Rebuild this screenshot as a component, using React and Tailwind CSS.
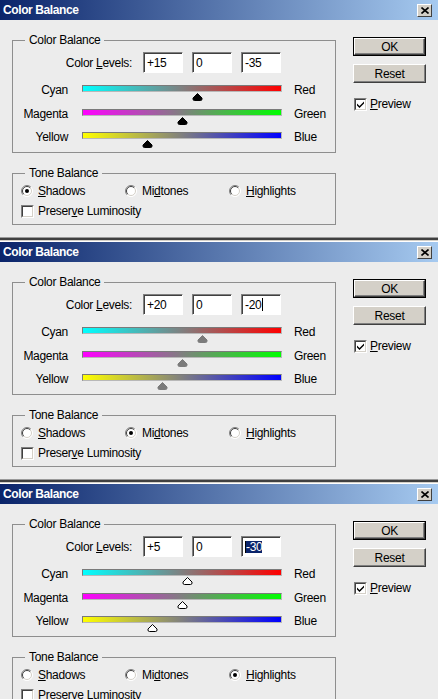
import React from 'react';

const dialogs = [
  { levels: ['+15', '0', '-35'], values: [15, 0, -35], tone: 'shadows', thumb: 'black', field: 'none' },
  { levels: ['+20', '0', '-20'], values: [20, 0, -20], tone: 'midtones', thumb: 'gray', field: 'caret' },
  { levels: ['+5', '0', '-30'], values: [5, 0, -30], tone: 'highlights', thumb: 'white', field: 'select' },
];

const sliders = [
  { left: 'Cyan', right: 'Red', track: 'bg-[linear-gradient(to_right,#00ffff,#ff0000)]' },
  { left: 'Magenta', right: 'Green', track: 'bg-[linear-gradient(to_right,#ff00ff,#00ff00)]' },
  { left: 'Yellow', right: 'Blue', track: 'bg-[linear-gradient(to_right,#ffff00,#0000ff)]' },
];

function Thumb({ variant, value }) {
  const fill = variant === 'black' ? '#000' : variant === 'gray' ? '#7b7b7b' : '#fff';
  const stroke = variant === 'white' ? '#000' : fill;
  // track is 200px wide for -100..+100
  const left = value + 100 - 5.5;
  return (
    <svg className="absolute top-[8px]" style={{ left }} width="11" height="8" viewBox="0 0 11 8">
      <path d="M5.5 0.5 L10 5 V6 Q10 7.5 8.5 7.5 H2.5 Q1 7.5 1 6 V5 Z" fill={fill} stroke={stroke} />
    </svg>
  );
}

function Radio({ checked }) {
  return (
    <svg width="12" height="12" viewBox="0 0 12 12" className="shrink-0">
      <circle cx="6" cy="6" r="5.5" fill="#fff" />
      <path d="M2.1 9.9 A5.5 5.5 0 0 1 9.9 2.1" fill="none" stroke="#808080" />
      <path d="M9.9 2.1 A5.5 5.5 0 0 1 2.1 9.9" fill="none" stroke="#ffffff" />
      <path d="M2.8 9.2 A4.5 4.5 0 0 1 9.2 2.8" fill="none" stroke="#404040" />
      <path d="M9.2 2.8 A4.5 4.5 0 0 1 2.8 9.2" fill="none" stroke="#d4d0c8" />
      {checked && <circle cx="6" cy="6" r="2" fill="#000" />}
    </svg>
  );
}

function CheckBox({ checked }) {
  return (
    <span className="flex h-[13px] w-[13px] shrink-0 border border-t-[#808080] border-l-[#808080] border-b-white border-r-white">
      <span className="flex h-full w-full items-center justify-center border border-t-[#404040] border-l-[#404040] border-b-[#d4d0c8] border-r-[#d4d0c8] bg-white">
        {checked && (
          <svg width="7" height="7" viewBox="0 0 7 7">
            <polygon points="0,2.5 2.5,5 7,0.5 7,2.5 2.5,7 0,4.5" fill="#000" />
          </svg>
        )}
      </span>
    </span>
  );
}

function LevelInput({ text, field }) {
  return (
    <div className="h-[21px] w-[40px] border border-t-[#808080] border-l-[#808080] border-b-white border-r-white bg-white shadow-[inset_1px_1px_0_#404040]">
      <div className="flex h-full items-center pl-[3px]">
        {field === 'select' ? (
          <>
            <span className="h-[12px] w-px bg-black" />
            <span className="bg-[#0a246a] leading-[12px] text-white">{text}</span>
          </>
        ) : (
          <>
            <span>{text}</span>
            {field === 'caret' && <span className="ml-px h-[13px] w-px bg-black" />}
          </>
        )}
      </div>
    </div>
  );
}

function RaisedButton({ label, isDefault }) {
  return (
    <div className={isDefault ? 'h-[19px] border border-black' : 'h-[19px]'}>
      <div className="flex h-full items-center justify-center border border-t-white border-l-white border-b-[#404040] border-r-[#404040] bg-[#d4d0c8] shadow-[inset_-1px_-1px_0_#808080]">
        {label}
      </div>
    </div>
  );
}

function Dialog({ first, levels, values, tone, thumb, field }) {
  return (
    <div className="flex flex-col">
      {!first && (
        <>
          <div className="h-px bg-[#d4d0c8]" />
          <div className="h-px bg-white" />
        </>
      )}
      {/* title bar */}
      <div className="flex h-[20px] items-center justify-between bg-[linear-gradient(to_right,#0a246a,#a6caf0)] pl-[3px] pr-[6px]">
        <span className="text-[12px] font-bold tracking-[-0.4px] text-white">Color Balance</span>
        <div className="flex h-[13px] w-[15px] items-center justify-center border border-t-white border-l-white border-b-[#404040] border-r-[#404040] bg-[#d4d0c8]">
          <svg width="8" height="7" viewBox="0 0 8 7">
            <path d="M0.5 0.5 L7.5 6.5 M7.5 0.5 L0.5 6.5" stroke="#000" strokeWidth="1.6" />
          </svg>
        </div>
      </div>

      <div className="flex h-[217px] pl-[12px]">
        <div className="w-[324px] pt-[13px]">
          <fieldset className="h-[120px] border border-[#8e8e8e]">
            <legend className="ml-[12px] px-[4px] leading-[14px]">Color Balance</legend>
            <div className="mt-[5px] flex h-[21px] items-center">
              <span className="w-[119px] text-right">
                Color <u>L</u>evels:
              </span>
              <div className="ml-[11px] flex gap-[9px]">
                {levels.map((t, i) => (
                  <LevelInput key={i} text={t} field={i === 2 ? field : 'none'} />
                ))}
              </div>
            </div>
            <div className="mt-[12px] flex flex-col gap-[8.5px]">
              {sliders.map((s, i) => (
                <div key={s.left} className="flex h-[15px] items-start">
                  <span className="-mt-[2px] w-[55px] text-right leading-[14px]">{s.left}</span>
                  <div className="relative ml-[14px] h-[15px] w-[200px]">
                    <div className={`h-[7px] border border-t-[#7a7a7a] border-l-[#7a7a7a] border-b-[#b8b8b8] border-r-[#b8b8b8] ${s.track}`} />
                    <Thumb variant={thumb} value={values[i]} />
                  </div>
                  <span className="-mt-[2px] ml-[12px] leading-[14px]">{s.right}</span>
                </div>
              ))}
            </div>
          </fieldset>

          <fieldset className="mt-[13px] h-[59px] border border-[#8e8e8e]">
            <legend className="ml-[12px] px-[4px] leading-[14px]">Tone Balance</legend>
            <div className="mt-[4px] flex h-[14px] items-center pl-[8px]">
              <label className="flex w-[104px] items-center gap-[5px]">
                <Radio checked={tone === 'shadows'} />
                <span><u>S</u>hadows</span>
              </label>
              <label className="flex w-[104px] items-center gap-[5px]">
                <Radio checked={tone === 'midtones'} />
                <span>Mi<u>d</u>tones</span>
              </label>
              <label className="flex items-center gap-[5px]">
                <Radio checked={tone === 'highlights'} />
                <span><u>H</u>ighlights</span>
              </label>
            </div>
            <div className="mt-[6px] flex h-[14px] items-center gap-[4px] pl-[8px]">
              <CheckBox checked={false} />
              <span>Preser<u>v</u>e Luminosity</span>
            </div>
          </fieldset>
        </div>

        <div className="ml-[17px] w-[73px] pt-[17px]">
          <RaisedButton label="OK" isDefault />
          <div className="mt-[8px]">
            <RaisedButton label="Reset" />
          </div>
          <div className="mt-[14px] flex h-[14px] items-center gap-[3px] pl-px">
            <CheckBox checked />
            <span><u>P</u>review</span>
          </div>
        </div>
      </div>

      <div className="h-px bg-[#9a9a9a]" />
      <div className="h-[2px] bg-[#404040]" />
    </div>
  );
}

export default function App() {
  return (
    <div className="h-[699px] w-[438px] overflow-hidden bg-[#ececec] font-['Liberation_Sans',Arial,sans-serif] text-[12px] tracking-[-0.3px] text-black">
      {dialogs.map((d, i) => (
        <Dialog key={i} first={i === 0} {...d} />
      ))}
    </div>
  );
}
